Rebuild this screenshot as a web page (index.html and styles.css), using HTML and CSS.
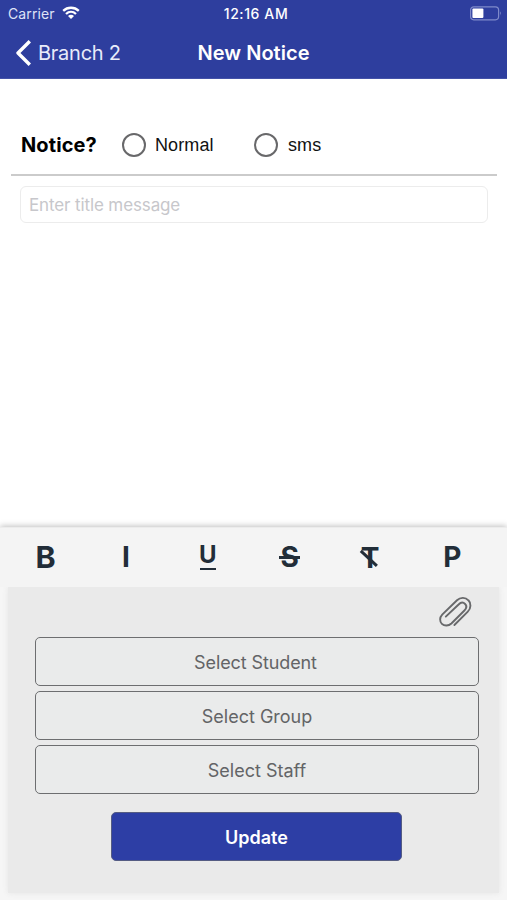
FILE: index.html
```html
<!DOCTYPE html>
<html lang="en">
<head>
<meta charset="utf-8">
<title>New Notice</title>
<link rel="stylesheet" href="styles.css">
</head>
<body>
<div class="screen">
  <header class="header">
    <div class="status">
      <div class="carrier"><span>Carrier</span>
        <svg class="wifi" width="18" height="14" viewBox="0 0 18 14" fill="none" stroke="#fff" stroke-width="2.3"><path d="M1.2 4.9C5.6.7 12.4.7 16.8 4.9M4 8C7 5.2 11 5.2 14 8"/><path d="M6 10C7.8 8.4 10.2 8.4 12 10L9 13Z" fill="#fff" stroke="none"/></svg>
      </div>
      <span class="clock">12:16 AM</span>
      <svg class="battery" width="32" height="15" viewBox="0 0 32 15"><rect x=".6" y=".8" width="28" height="13" rx="3.2" fill="none" stroke="#7f8aca" stroke-width="1.2"/><rect x="2.4" y="2.5" width="11" height="9.4" rx="1" fill="#fff"/><path d="M30 5.2Q31.8 7.3 30 9.4Z" fill="#8e98d2"/></svg>
    </div>
    <nav class="nav">
      <a class="back"><svg width="16" height="26" viewBox="0 0 16 26" fill="none" stroke="#fff" stroke-width="3.4" stroke-linejoin="round"><path d="M14.8 1.2 3 13 14.8 24.8"/></svg><span>Branch 2</span></a>
      <h1 class="title">New Notice</h1>
      <span></span>
    </nav>
  </header>
  <main class="form">
    <div class="kind">
      <span class="question">Notice?</span>
      <label class="option normal"><i class="ring"></i><span>Normal</span></label>
      <label class="option sms"><i class="ring"></i><span>sms</span></label>
    </div>
    <div class="field">Enter title message</div>
  </main>
  <section class="panel">
    <div class="tools">
      <span class="tool bold">B</span>
      <span class="tool italic">I</span>
      <span class="tool underline">U</span>
      <span class="tool strike">S</span>
      <span class="tool clear">T</span>
      <span class="tool para">P</span>
    </div>
    <div class="actions">
      <div class="attach"><svg width="33" height="31" viewBox="0 0 33 31" fill="none" stroke="#68696b" stroke-width="1.9" stroke-linecap="round"><path d="M15.4 29 28.8 15.7C32.2 12.2 32.2 7 29.4 4.3C26.5 1.2 21.5.9 18 4.3L3.2 18.6C.5 21.5.5 25.4 2.9 27.8C5.3 30.2 9.5 30.2 12.4 27.5L25.4 14.5C27.7 12.2 27.8 9.7 26.1 8C24.3 6.2 21.8 6.3 19.6 8.5L6.8 20.6"/></svg></div>
      <button class="select student">Select Student</button>
      <button class="select">Select Group</button>
      <button class="select">Select Staff</button>
      <button class="update">Update</button>
    </div>
  </section>
</div>
</body>
</html>
```
FILE: styles.css
```css
* { box-sizing: border-box; }
body { margin: 0; background: #fff; font-family: Inter, "Liberation Sans", sans-serif; }
.screen { width: 507px; height: 900px; display: flex; flex-direction: column; overflow: hidden; }
.header { height: 79px; background: #2e3e9e; color: #fff; border-bottom: 1px solid #4452a8; flex: none; }
.status { height: 27px; display: grid; grid-template-columns: 1fr auto 1fr; align-items: center; padding: 0 5px 0 8px; font-size: 14px; }
.carrier { display: flex; align-items: center; gap: 7px; color: #dfe3f7; letter-spacing: .1px; }
.carrier svg { margin-top: -1px; }
.clock { font-weight: 500; letter-spacing: .6px; margin-left: 2px; }
.battery { justify-self: end; }
.nav { height: 51px; display: grid; grid-template-columns: 1fr auto 1fr; align-items: center; padding: 0 15px; }
.back { display: flex; align-items: center; gap: 7px; font-size: 20px; letter-spacing: -.25px; color: #e8ebfa; }
.title { margin: 0; font-size: 20px; font-weight: 600; letter-spacing: .05px; }
.form { flex: 1; padding: 39px 10px 0 11px; }
.kind { height: 58px; display: flex; align-items: center; padding: 0 0 2px 10px; border-bottom: 2px solid #cbcbcb; }
.question { width: 101px; font-size: 20px; font-weight: 700; letter-spacing: .1px; color: #000; }
.option { display: flex; align-items: center; gap: 9px; font: 18px "Liberation Sans", sans-serif; letter-spacing: .1px; color: #111; }
.normal { width: 132px; }
.sms { gap: 10px; }
.ring { width: 24px; height: 24px; border: 2px solid #68686a; border-radius: 50%; flex: none; }
.field { margin: 10px 9px 0; height: 37px; border: 1px solid #ececec; border-radius: 6px; padding-left: 8px; line-height: 36px; font-size: 17px; letter-spacing: -.12px; color: #c7c7cb; }
.panel { height: 373px; flex: none; background: #f6f6f6; box-shadow: 0 -1px 6px rgba(0,0,0,.25); }
.tools { position: relative; height: 60px; display: grid; grid-template-columns: repeat(6, 1fr); align-items: center; justify-items: center; padding: 0 14px 0 5px; border-top: 1px solid #ececec; background: #f4f4f4; }
.tool { position: relative; font-size: 28px; line-height: 34px; font-weight: 700; color: #222d38; }
.bold { font-size: 30.5px; margin-top: -2px; }
.italic { margin-right: 2px; margin-top: -1px; }
.underline { font-size: 24px; line-height: 30px; padding-bottom: 5px; margin-right: 1px; }
.underline::after { content: ""; position: absolute; left: 1px; right: 1px; bottom: 5px; height: 2.5px; background: #222d38; }
.strike { margin-top: -1px; }
.strike::after { content: ""; position: absolute; left: -1px; right: -1px; top: 16px; height: 2.5px; background: #222d38; }
.clear { font-size: 28px; margin-right: 2px; }
.clear::after { content: ""; position: absolute; left: -2.5px; top: 16px; width: 22px; height: 2.5px; background: #222d38; transform: rotate(43deg); }
.para { margin-top: -2px; }
.actions { height: 306px; display: flex; flex-direction: column; background: #eaeaea; padding: 9px 20px 0 27px; margin: 0 8px; box-shadow: 0 0 6px #e4e4e4; }
.attach { height: 41px; display: flex; justify-content: flex-end; padding-right: 7px; }
.select { flex: none; height: 49px; padding: 2px 6px 0; margin: 0 0 5px; border: 1.5px solid #6d6e70; border-radius: 5px; background: #eaebeb; font: 18px Inter, sans-serif; color: #636466; }
.student { padding-right: 9px; letter-spacing: -.1px; }
.update { flex: none; align-self: center; width: 291px; height: 49px; padding-top: 2px; margin: 13px 1px 0 0; border: 1px solid #555c83; border-radius: 5px; background: #2d3ea5; color: #fff; font: 600 18px Inter, sans-serif; }
```
